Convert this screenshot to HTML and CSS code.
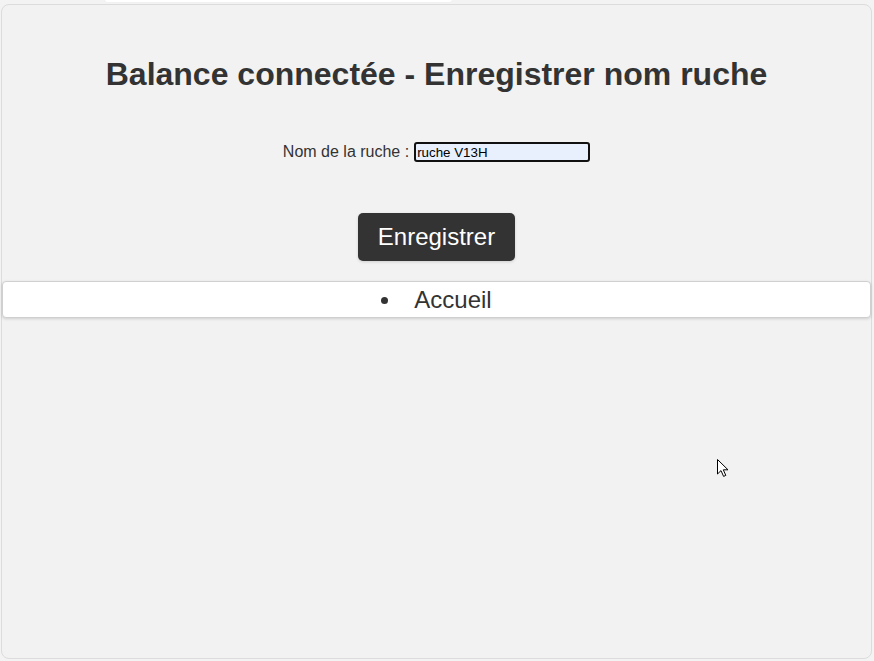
FILE: index.html
```html
<!DOCTYPE html>
<html lang="fr">
<head>
<meta charset="utf-8">
<title>Balance connectée</title>
<link rel="stylesheet" href="styles.css">
</head>
<body>
<div class="tab"></div>
<main class="panel">
  <h1 class="title">Balance connectée - Enregistrer nom ruche</h1>
  <form class="form">
    <div class="field">
      <label class="label" for="nom">Nom de la ruche :</label>
      <input class="input" id="nom" type="text" value="ruche V13H">
    </div>
    <button class="btn" type="button">Enregistrer</button>
  </form>
  <nav class="nav">
    <ul class="nav-list">
      <li class="nav-item">Accueil</li>
    </ul>
  </nav>
</main>
<svg class="cursor" width="13" height="20" viewBox="0 0 13 20">
  <path d="M1.5 1.5 L1.5 16 L5 12.6 L7.6 18.4 L9.8 17.4 L7.3 11.8 L12 11.8 Z" fill="#fff" stroke="#000" stroke-width="1" stroke-linejoin="miter"/>
</svg>
</body>
</html>
```
FILE: styles.css
```css
html, body {
  margin: 0;
  padding: 0;
}
body {
  background: #f3f3f3;
  font-family: "Liberation Sans", Arial, sans-serif;
  color: #333;
  height: 661px;
  overflow: hidden;
  position: relative;
}
.tab {
  position: absolute;
  left: 105px;
  top: 0;
  width: 347px;
  height: 2px;
  background: #fff;
  border-radius: 0 0 4px 4px;
  box-shadow: 0 0 1px #ddd;
}
.panel {
  margin: 4px 2px 0 1px;
  height: 655px;
  box-sizing: border-box;
  background: #f2f2f2;
  border: 1px solid #dcdcdc;
  border-radius: 8px;
  display: flex;
  flex-direction: column;
  align-items: stretch;
}
.title {
  margin: 51px 0 0 0;
  font-size: 32px;
  line-height: 36px;
  font-weight: bold;
  text-align: center;
  color: #333;
}
.form {
  margin-top: 50px;
  display: flex;
  flex-direction: column;
  align-items: center;
}
.field {
  display: flex;
  align-items: center;
  gap: 5px;
  height: 20px;
  font-size: 16px;
}
.label {
  color: #333;
}
.input {
  width: 176px;
  height: 20px;
  box-sizing: border-box;
  border: 2px solid #111;
  border-radius: 3px;
  background: #e8f0fe;
  font-family: "Liberation Sans", Arial, sans-serif;
  font-size: 13.33px;
  color: #000;
  padding: 0 1px;
  outline: none;
}
.btn {
  margin-top: 51px;
  width: 157px;
  height: 48px;
  background: #333;
  color: #fff;
  border: none;
  border-radius: 5px;
  font-family: "Liberation Sans", Arial, sans-serif;
  font-size: 24px;
  box-shadow: 0 1px 3px rgba(0,0,0,0.15);
  padding: 0;
}
.nav {
  margin: 20px 0 0 0;
  height: 37px;
  box-sizing: border-box;
  background: #fff;
  border: 1px solid #d0d0d0;
  border-radius: 4px;
  box-shadow: 0 1px 3px rgba(0,0,0,0.15);
}
.nav-list {
  margin: 0;
  padding: 0;
  text-align: center;
  list-style: none;
  font-size: 24px;
  line-height: 35px;
  color: #333;
}
.nav-item::before {
  content: "";
  display: inline-block;
  width: 7px;
  height: 7px;
  border-radius: 50%;
  background: #333;
  margin-right: 26px;
  vertical-align: middle;
  position: relative;
  top: -1px;
}
.cursor {
  position: absolute;
  left: 716px;
  top: 458px;
}
```
